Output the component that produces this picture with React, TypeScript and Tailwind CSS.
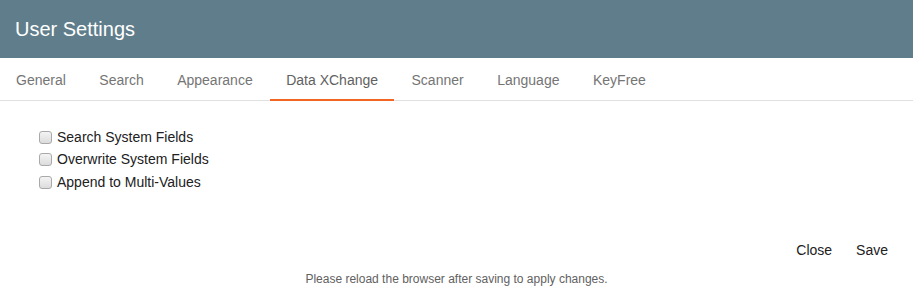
import { useState } from 'react'

const tabs = ['General', 'Search', 'Appearance', 'Data XChange', 'Scanner', 'Language', 'KeyFree']
const options = ['Search System Fields', 'Overwrite System Fields', 'Append to Multi-Values']

function Checkbox({ label }: { label: string }) {
  const [checked, setChecked] = useState(false)
  return (
    <label className="flex items-center h-[22.5px] cursor-pointer">
      <span
        onClick={() => setChecked(!checked)}
        className="w-[13px] h-[13px] rounded-[3px] border border-[#a9a9a9] bg-gradient-to-b from-[#f4f4f4] to-[#dcdcdc] mr-[5px] ml-[4px]"
      />
      <span className="text-[14px] text-[#212121]">{label}</span>
    </label>
  )
}

export default function App() {
  const [active, setActive] = useState('Data XChange')

  return (
    <div className="w-[913px] h-[301px] bg-white flex flex-col" style={{ fontFamily: '"Liberation Sans", Arial, sans-serif' }}>
      <header className="h-[58px] bg-[#607d8b] flex items-center px-[15px]">
        <h1 className="text-white text-[20px] leading-none">User Settings</h1>
      </header>

      <nav className="h-[43px] flex border-b border-[#e0e0e0] gap-[1.5px]">
        {tabs.map((tab) => (
          <button
            key={tab}
            onClick={() => setActive(tab)}
            className={
              'px-4 pt-[3px] text-[14px] flex items-center border-b-2 -mb-px ' +
              (active === tab ? 'border-[#f26522] text-[#616161]' : 'border-transparent text-[#757575]')
            }
          >
            {tab}
          </button>
        ))}
      </nav>

      <div className="pt-[25px] pl-[35px] flex flex-col">
        {options.map((o) => (
          <Checkbox key={o} label={o} />
        ))}
      </div>

      <div className="mt-auto flex flex-col">
        <div className="flex justify-end gap-[24px] pr-[25px]">
          <button className="text-[14px] text-[#212121]">Close</button>
          <button className="text-[14px] text-[#212121]">Save</button>
        </div>
        <p className="text-center text-[12px] text-[#616161] mt-[9px] mb-[13px]">
          Please reload the browser after saving to apply changes.
        </p>
      </div>
    </div>
  )
}
